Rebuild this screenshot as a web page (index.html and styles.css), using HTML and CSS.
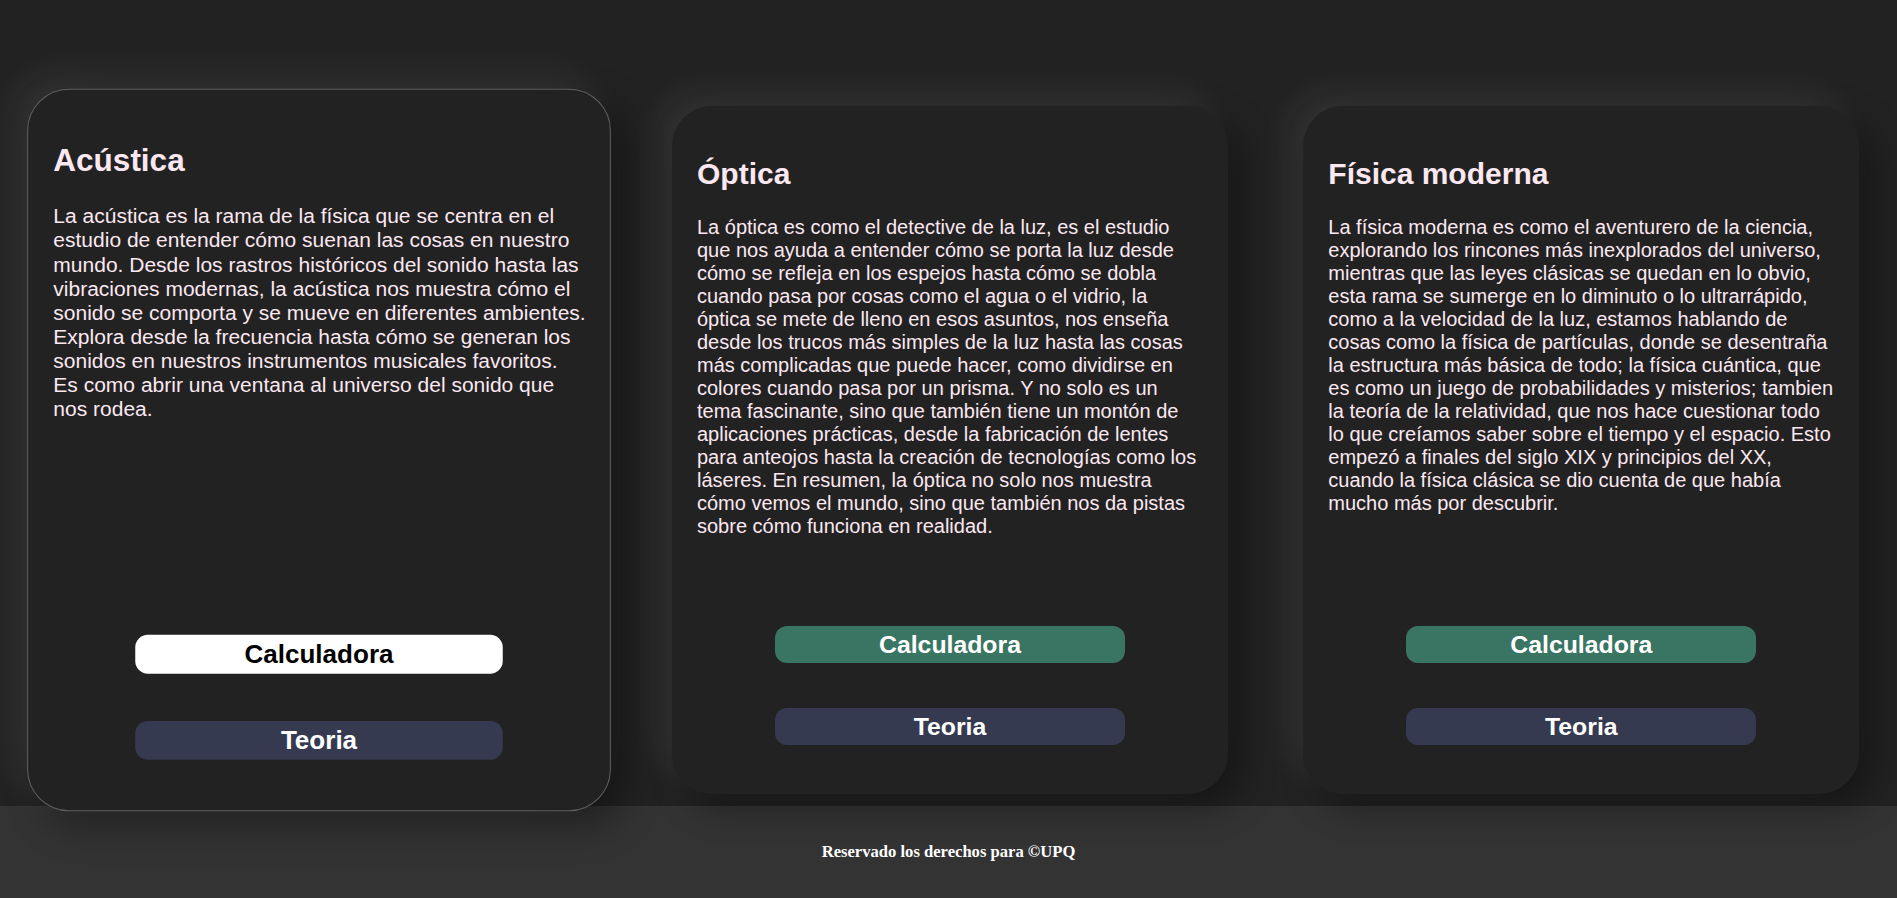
FILE: index.html
```html
<!DOCTYPE html>
<html lang="es">
<head>
<meta charset="utf-8">
<title>Física</title>
<link rel="stylesheet" href="styles.css">
</head>
<body>
<main class="cards">
  <section class="card card--active">
    <h2 class="card-title">Acústica</h2>
    <p class="card-text">La acústica es la rama de la física que se centra en el estudio de entender cómo suenan las cosas en nuestro mundo. Desde los rastros históricos del sonido hasta las vibraciones modernas, la acústica nos muestra cómo el sonido se comporta y se mueve en diferentes ambientes. Explora desde la frecuencia hasta cómo se generan los sonidos en nuestros instrumentos musicales favoritos. Es como abrir una ventana al universo del sonido que nos rodea.</p>
    <div class="card-actions">
      <a class="btn btn-calc btn-calc--hover">Calculadora</a>
      <a class="btn btn-theory">Teoria</a>
    </div>
  </section>
  <section class="card">
    <h2 class="card-title">Óptica</h2>
    <p class="card-text">La óptica es como el detective de la luz, es el estudio que nos ayuda a entender cómo se porta la luz desde cómo se refleja en los espejos hasta cómo se dobla cuando pasa por cosas como el agua o el vidrio, la óptica se mete de lleno en esos asuntos, nos enseña desde los trucos más simples de la luz hasta las cosas más complicadas que puede hacer, como dividirse en colores cuando pasa por un prisma. Y no solo es un tema fascinante, sino que también tiene un montón de aplicaciones prácticas, desde la fabricación de lentes para anteojos hasta la creación de tecnologías como los láseres. En resumen, la óptica no solo nos muestra cómo vemos el mundo, sino que también nos da pistas sobre cómo funciona en realidad.</p>
    <div class="card-actions">
      <a class="btn btn-calc">Calculadora</a>
      <a class="btn btn-theory">Teoria</a>
    </div>
  </section>
  <section class="card">
    <h2 class="card-title">Física moderna</h2>
    <p class="card-text">La física moderna es como el aventurero de la ciencia, explorando los rincones más inexplorados del universo, mientras que las leyes clásicas se quedan en lo obvio, esta rama se sumerge en lo diminuto o lo ultrarrápido, como a la velocidad de la luz, estamos hablando de cosas como la física de partículas, donde se desentraña la estructura más básica de todo; la física cuántica, que es como un juego de probabilidades y misterios; tambien la teoría de la relatividad, que nos hace cuestionar todo lo que creíamos saber sobre el tiempo y el espacio. Esto empezó a finales del siglo XIX y principios del XX, cuando la física clásica se dio cuenta de que había mucho más por descubrir.</p>
    <div class="card-actions">
      <a class="btn btn-calc">Calculadora</a>
      <a class="btn btn-theory">Teoria</a>
    </div>
  </section>
</main>
<footer class="footer">
  <p class="footer-text">Reservado los derechos para ©UPQ</p>
</footer>
</body>
</html>
```

FILE: styles.css
```css
html, body {
  margin: 0;
  padding: 0;
}

body {
  background: #222222;
  font-family: "Liberation Sans", Arial, sans-serif;
  overflow: hidden;
}

.cards {
  height: 806px;
  box-sizing: border-box;
  padding: 106px 0 12px 3px;
  display: flex;
  justify-content: space-around;
  align-items: flex-start;
}

.card {
  width: 556px;
  height: 688px;
  box-sizing: border-box;
  padding: 26px 22px 22px 24px;
  background: #222222;
  border: 1px solid transparent;
  border-radius: 40px;
  display: flex;
  flex-direction: column;
  box-shadow: -14px -14px 34px rgba(255, 255, 255, 0.075), 14px 14px 34px rgba(0, 0, 0, 0.35);
  color: #fce8f1;
}

.card--active {
  transform: scale(1.05);
  border-color: #5e5e5e;
}

.card-title {
  font-size: 30px;
  font-weight: bold;
  margin: 24px 0 25px;
  line-height: 34px;
}

.card-text {
  font-size: 20px;
  line-height: 23px;
  margin: 0;
}

.card-actions {
  margin: auto 0 26px -2px;
  display: flex;
  flex-direction: column;
  align-items: center;
  gap: 45px;
}

.btn {
  display: block;
  width: 350px;
  height: 37px;
  line-height: 37px;
  border-radius: 12px;
  text-align: center;
  font-size: 24.8px;
  font-weight: bold;
  color: #ffffff;
  cursor: pointer;
}

.btn-calc {
  background: #3a7563;
}

.btn-calc--hover {
  background: #ffffff;
  color: #000000;
}

.btn-theory {
  background: #363a50;
}

.footer {
  height: 92px;
  background: #333333;
  display: flex;
  align-items: center;
  justify-content: center;
}

.footer-text {
  margin: 0;
  font-family: "Liberation Serif", "Times New Roman", serif;
  font-weight: bold;
  font-size: 16.6px;
  color: #ffffff;
}
```
